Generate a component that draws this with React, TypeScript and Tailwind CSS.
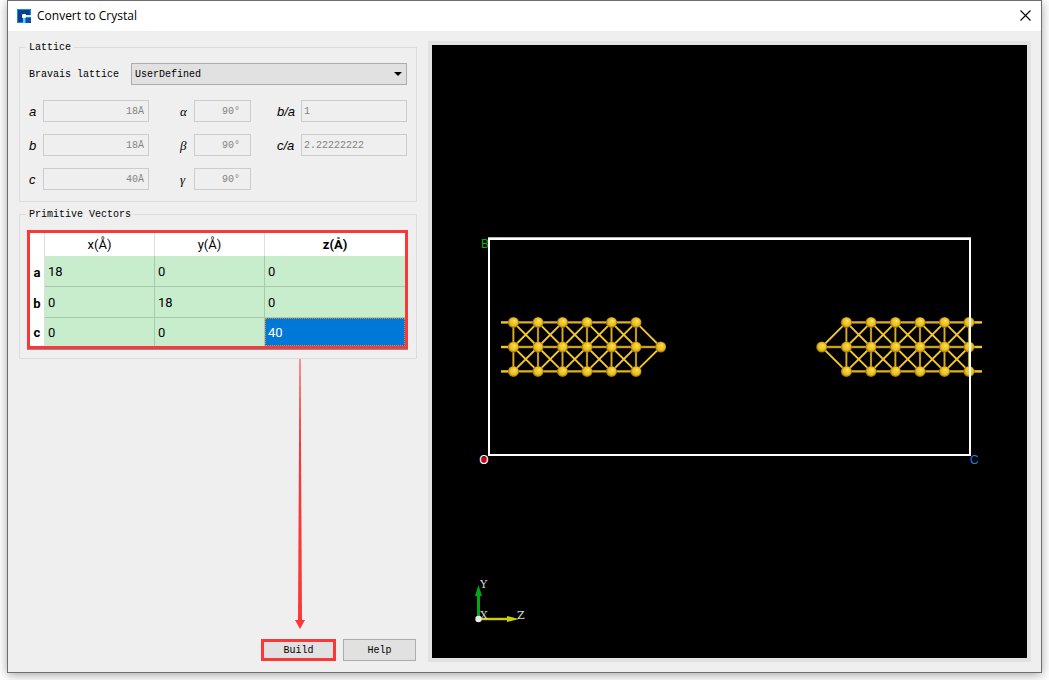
import type { ReactNode } from 'react';

const mono = "font-['Liberation_Mono','Noto_Sans_CJK_SC',monospace] text-[10px]";

const lengths = [
  { id: 'a', label: 'a', value: '18Å' },
  { id: 'b', label: 'b', value: '18Å' },
  { id: 'c', label: 'c', value: '40Å' },
];

const angles = [
  { id: 'alpha', label: 'α', value: '90°' },
  { id: 'beta', label: 'β', value: '90°' },
  { id: 'gamma', label: 'γ', value: '90°' },
];

const ratios = [
  { id: 'ba', label: 'b/a', value: '1' },
  { id: 'ca', label: 'c/a', value: '2.22222222' },
];

const vectors = [
  { name: 'a', values: [18, 0, 0] },
  { name: 'b', values: [0, 18, 0] },
  { name: 'c', values: [0, 0, 40] },
];

const rowY = [277.4, 302, 326.4];
const leftX = [81.4, 106, 130.5, 155, 179.5, 204];
const rightX = [414.4, 439, 463.4, 488, 512.5, 537];

function Group({ title, children }: { title: string; children: ReactNode }) {
  return (
    <fieldset className="min-w-0 border border-[#dcdcdc] px-1.5">
      <legend className={`h-3 px-[3px] leading-[14px] ${mono}`}>{title}</legend>
      {children}
    </fieldset>
  );
}

type FieldProps = {
  id: string;
  label: string;
  value: string;
  labelClass: string;
  inputClass: string;
};

function Field({ id, label, value, labelClass, inputClass }: FieldProps) {
  return (
    <div className="flex h-[22px] items-center">
      <label htmlFor={id} className={`shrink-0 pt-0.5 italic ${labelClass}`}>
        {label}
      </label>
      <input
        id={id}
        defaultValue={value}
        disabled
        className={`h-[22px] min-w-0 flex-1 border border-[#cccccc] bg-[#efefef] text-[#838383] ${mono} ${inputClass}`}
      />
    </div>
  );
}

function AppIcon() {
  return (
    <svg viewBox="0 0 14 14" className="size-3.5" aria-hidden="true">
      <rect width="14" height="14" fill="#1490e6" />
      <path d="M1 1H13V6H8V13H1Z" fill="#0a3f94" />
      <rect x="9" y="9" width="5" height="5" fill="#0a4fa8" />
      <path d="M7 8V14" stroke="#6fcbf8" strokeWidth="2" />
      <path d="M8 7H14" stroke="#d8f1fd" strokeWidth="2" />
      <rect x="5" y="5" width="4" height="4" rx="1" fill="#ffffff" />
    </svg>
  );
}

function Cluster({ xs, tip, edge }: { xs: number[]; tip: number; edge: number }) {
  const near = tip > xs[0] ? xs[5] : xs[0];
  const far = tip > xs[0] ? xs[0] : xs[5];

  return (
    <g>
      <g strokeWidth="1.9" stroke="#f3c62a">
        {xs.slice(0, -1).map((x, i) =>
          [0, 1].map((r) => (
            <path
              key={`${x}-${r}`}
              d={`M${x} ${rowY[r]}L${xs[i + 1]} ${rowY[r + 1]}M${xs[i + 1]} ${rowY[r]}L${x} ${rowY[r + 1]}`}
            />
          )),
        )}
        <path d={`M${near} ${rowY[0]}L${tip} ${rowY[1]}L${near} ${rowY[2]}`} fill="none" />
        {rowY.map((y) => (
          <path key={y} d={`M${far} ${y}H${edge}`} strokeWidth="2.4" />
        ))}
      </g>
      {rowY.map((y, r) => (
        <g key={y}>
          <path d={`M${far} ${y}H${r === 1 ? tip : near}`} stroke="#9a7613" strokeWidth="2.6" />
          <path d={`M${far} ${y}H${r === 1 ? tip : near}`} stroke="#dcb024" strokeWidth="1.4" />
        </g>
      ))}
      {xs.map((x) => (
        <g key={x}>
          <path d={`M${x} ${rowY[0]}V${rowY[2]}`} stroke="#9a7613" strokeWidth="2.2" />
          <path d={`M${x} ${rowY[0]}V${rowY[2]}`} stroke="#dcb024" strokeWidth="1.2" />
        </g>
      ))}
      {xs.map((x) => rowY.map((y) => <circle key={`${x}-${y}`} cx={x} cy={y} r="5.5" fill="url(#atom)" />))}
      <circle cx={tip} cy={rowY[1]} r="5.5" fill="url(#atom)" />
    </g>
  );
}

function Viewer() {
  return (
    <svg viewBox="0 0 595 613" className="size-full" role="img" aria-label="Crystal structure">
      <defs>
        <radialGradient id="atom" cx="0.5" cy="0.5" r="0.5" fx="0.62" fy="0.34">
          <stop offset="0" stopColor="#fff3b0" />
          <stop offset="0.22" stopColor="#fad232" />
          <stop offset="0.7" stopColor="#e9bd22" />
          <stop offset="1" stopColor="#8f6c0a" />
        </radialGradient>
      </defs>

      <text x="49" y="203" fontSize="12" fill="#00b400" className="font-['Liberation_Sans',sans-serif]">B</text>
      <Cluster xs={leftX} tip={228.7} edge={69} />
      <Cluster xs={rightX} tip={389.7} edge={550} />
      <path d="M56 193.5H539" stroke="#b4b4b4" strokeWidth="3" />
      <rect x="57" y="194" width="481" height="216" fill="none" stroke="#ffffff" strokeWidth="2" />

      <g className="font-['Liberation_Sans',sans-serif]" fontSize="12">
        <circle cx="52" cy="415" r="3" fill="#d00018" />
        <text x="52" y="419" textAnchor="middle" fill="#ffffff">O</text>
        <text x="538" y="419" fill="#0a84e0">C</text>
      </g>

      {/* orientation axes */}
      <path d="M46.5 574V551" stroke="#00a814" strokeWidth="3" />
      <path d="M46.5 540L50 551H43Z" fill="#00a814" />
      <path d="M47 574H75" stroke="#cfcf00" strokeWidth="2.4" />
      <path d="M75 571L87 574L75 577Z" fill="#cfcf00" />
      <circle cx="46.5" cy="574" r="3.2" fill="#eeeeee" />
      <g className="font-['DejaVu_Serif',serif]" fontSize="11" fill="#d8d8d8">
        <text x="48" y="543">Y</text>
        <text x="48" y="574">X</text>
        <text x="85" y="574">Z</text>
      </g>
    </svg>
  );
}

export default function App() {
  return (
    <div className="flex min-h-screen flex-col bg-white px-[7px] pb-[7px] text-black">
      <main className="flex flex-1 flex-col border border-[#6e6e6e] bg-[#efefef] shadow-[0_2px_10px_rgba(0,0,0,0.35)]">
        <header className="flex h-[30px] items-center justify-between bg-white pr-2.5 pb-px pl-[9px]">
          <div className="flex items-center gap-1.5">
            <AppIcon />
            <h1 className="font-['Open_Sans','Noto_Sans',sans-serif] text-xs">Convert to Crystal</h1>
          </div>
          <button type="button" aria-label="Close" className="size-[11px]">
            <svg viewBox="0 0 11 11" className="size-full">
              <path d="M0.5 0.5L10.5 10.5M10.5 0.5L0.5 10.5" stroke="#000000" strokeWidth="1.1" />
            </svg>
          </button>
        </header>

        <div className="flex flex-1 gap-[11px] pt-2.5 pr-2.5 pb-2.5 pl-[11px]">
          <section className="flex w-[398px] shrink-0 flex-col">
            <Group title="Lattice">
              <div className="px-[3px] pt-2.5 pb-[11px]">
                <div className={`flex items-center ${mono}`}>
                  <label htmlFor="bravais" className="w-[102px]">Bravais lattice</label>
                  <div className="relative flex-1">
                    <select
                      id="bravais"
                      className="block h-[22px] w-full appearance-none border border-[#adadad] bg-[#e1e1e1] pl-[3px]"
                    >
                      <option>UserDefined</option>
                    </select>
                    <svg viewBox="0 0 8 4" className="pointer-events-none absolute top-[9px] right-[5px] h-1 w-2">
                      <path d="M0 0H8L4 4Z" />
                    </svg>
                  </div>
                </div>

                <div className="mt-[15px] flex font-['Liberation_Sans',sans-serif] text-[13px]">
                  <div className="flex w-[120px] shrink-0 flex-col gap-3">
                    {lengths.map((item) => (
                      <Field key={item.id} {...item} labelClass="w-3.5" inputClass="pr-1 text-right" />
                    ))}
                  </div>
                  <div className="ml-[31px] flex w-[71px] shrink-0 flex-col gap-3">
                    {angles.map((item) => (
                      <Field
                        key={item.id}
                        {...item}
                        labelClass="w-3.5 font-['Liberation_Serif',serif]"
                        inputClass="pr-2.5 text-right"
                      />
                    ))}
                  </div>
                  <div className="ml-[26px] flex min-w-0 flex-1 flex-col gap-3">
                    {ratios.map((item) => (
                      <Field key={item.id} {...item} labelClass="w-6" inputClass="pl-0.5" />
                    ))}
                  </div>
                </div>
              </div>
            </Group>

            <div className="mt-1.5">
              <Group title="Primitive Vectors">
                <div className="pt-2.5 pr-0.5 pb-[9px] pl-px">
                  <div className="border-3 border-[#fb3838] bg-white shadow-[0_1px_0_#8a8f98]">
                    <table className="w-full table-fixed border-separate border-spacing-0 font-['Roboto',sans-serif] text-[13px]">
                      <colgroup>
                        <col className="w-[15px]" />
                        <col className="w-[110px]" />
                        <col className="w-[110px]" />
                        <col />
                      </colgroup>
                      <thead>
                        <tr className="h-[23px]">
                          <td className="border-r border-[#dedede]" />
                          <th scope="col" className="border-r border-[#dedede] p-0 font-normal">x(Å)</th>
                          <th scope="col" className="border-r border-[#dedede] p-0 font-normal">y(Å)</th>
                          <th scope="col" className="p-0 font-bold">z(Å)</th>
                        </tr>
                      </thead>
                      <tbody>
                        {vectors.map((row, r) => (
                          <tr key={row.name} className={r === 2 ? 'h-7' : 'h-[31px]'}>
                            <th scope="row" className="border-r border-[#dedede] p-0 pt-0.5 font-bold">{row.name}</th>
                            {row.values.map((value, i) => {
                              const selected = r === 2 && i === 2;
                              return (
                                <td
                                  key={i}
                                  className={
                                    selected
                                      ? 'border border-dotted border-[#e58a35] bg-[#0078d7] px-0.5 pt-0.5 pb-0 text-white'
                                      : `border-[#a9c8ac] bg-[#c8edcd] px-[3px] pt-0.5 pb-0 ${i < 2 ? 'border-r' : ''} ${r < 2 ? 'border-b' : ''}`
                                  }
                                >
                                  {value}
                                </td>
                              );
                            })}
                          </tr>
                        ))}
                      </tbody>
                    </table>
                  </div>
                </div>
              </Group>
            </div>

            <div className="ml-[276px] flex w-2.5 flex-1 flex-col items-center pb-2.5" aria-hidden="true">
              <svg viewBox="0 0 4 100" preserveAspectRatio="none" className="min-h-0 w-1 flex-1">
                <path d="M1.5 0H2.5L4 100H0Z" fill="#fb3838" />
              </svg>
              <svg viewBox="0 0 10 9" className="h-[9px] w-2.5">
                <path d="M0 0H10L5 9Z" fill="#fb3838" />
              </svg>
            </div>

            <div className={`flex justify-end gap-[7px] pr-px pb-px ${mono}`}>
              <button type="button" className="h-[22px] w-[75px] border-3 border-[#fb3838] bg-[#e1e1e1]">Build</button>
              <button type="button" className="h-[22px] w-[73px] border border-[#adadad] bg-[#e1e1e1]">Help</button>
            </div>
          </section>

          <section className="min-w-0 flex-1 border-4 border-[#e3e3e3] bg-black">
            <Viewer />
          </section>
        </div>
      </main>
    </div>
  );
}
